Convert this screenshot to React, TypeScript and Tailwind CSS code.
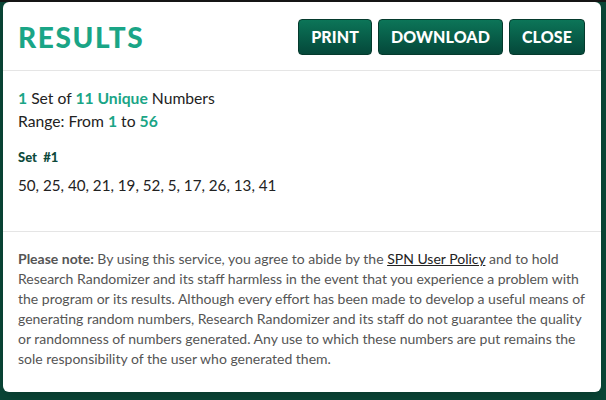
import React from "react";

const buttons = ["PRINT", "DOWNLOAD", "CLOSE"];

const App = () => {
  return (
    <div className="w-[606px] h-[400px] overflow-hidden bg-[#0a4536] flex flex-col font-['Lato',sans-serif]">
      <div className="h-[2px] bg-[#151515]" />
      <div className="mx-[3px] w-[598px] h-[390px] bg-white rounded-md shadow-lg flex flex-col">
        <div className="h-[69px] flex items-center justify-between pl-[15px] pr-[16px] border-b border-[#e5e5e5]">
          <h1 className="text-[28px] font-black tracking-[1.6px] text-[#1aa586] leading-none pt-[1px]">
            RESULTS
          </h1>
          <div className="flex gap-[6px] pt-[1px]">
            {buttons.map((label) => (
              <button
                key={label}
                className="h-[36px] px-[12px] rounded-[4px] border border-[#053a2d] bg-gradient-to-b from-[#0c7558] to-[#05483a] text-white text-[16px] font-black tracking-[0.1px]"
              >
                {label}
              </button>
            ))}
          </div>
        </div>
        <div className="h-[161px] px-[15px] pt-[16px] border-b border-[#e5e5e5] text-[#222]">
          <p className="leading-[23px] text-[15.7px]">
            <span className="font-bold text-[#1aa586]">1</span> Set of{" "}
            <span className="font-bold text-[#1aa586]">11 Unique</span> Numbers
          </p>
          <p className="leading-[23px] text-[15.7px]">
            Range: From <span className="font-bold text-[#1aa586]">1</span> to{" "}
            <span className="font-bold text-[#1aa586]">56</span>
          </p>
          <p className="mt-[14px] text-[13px] font-black text-[#0d4a3b] leading-[20px]">
            Set &nbsp;#1
          </p>
          <p className="mt-[8px] leading-[20px] text-[15.2px]">
            50, 25, 40, 21, 19, 52, 5, 17, 26, 13, 41
          </p>
        </div>
        <div className="px-[15px] pr-[12px] pt-[17px] text-[14px] leading-[20px] text-[#555]">
          <span className="font-bold">Please note:</span> By using this service, you agree to abide by the{" "}
          <a className="underline text-[#222]">SPN User Policy</a> and to hold Research Randomizer and its
          staff harmless in the event that you experience a problem with the program or its results.
          Although every effort has been made to develop a useful means of generating random numbers,
          Research Randomizer and its staff do not guarantee the quality or randomness of numbers
          generated. Any use to which these numbers are put remains the sole responsibility of the user
          who generated them.
        </div>
      </div>
    </div>
  );
};

export default App;
